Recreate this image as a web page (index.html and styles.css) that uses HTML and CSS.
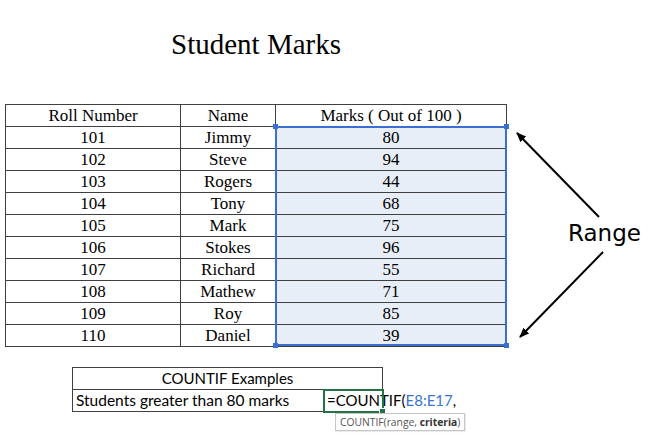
FILE: index.html
```html
<!DOCTYPE html>
<html>
<head>
<meta charset="utf-8">
<link rel="stylesheet" href="styles.css">
</head>
<body>
<div class="page">
  <h1 class="title">Student Marks</h1>

  <div class="marks">
    <div class="cell head">Roll Number</div>
    <div class="cell head">Name</div>
    <div class="cell head">Marks ( Out of 100 )</div>

    <div class="cell">101</div><div class="cell">Jimmy</div><div class="cell sel">80</div>
    <div class="cell">102</div><div class="cell">Steve</div><div class="cell sel">94</div>
    <div class="cell">103</div><div class="cell">Rogers</div><div class="cell sel">44</div>
    <div class="cell">104</div><div class="cell">Tony</div><div class="cell sel">68</div>
    <div class="cell">105</div><div class="cell">Mark</div><div class="cell sel">75</div>
    <div class="cell">106</div><div class="cell">Stokes</div><div class="cell sel">96</div>
    <div class="cell">107</div><div class="cell">Richard</div><div class="cell sel">55</div>
    <div class="cell">108</div><div class="cell">Mathew</div><div class="cell sel">71</div>
    <div class="cell">109</div><div class="cell">Roy</div><div class="cell sel">85</div>
    <div class="cell">110</div><div class="cell">Daniel</div><div class="cell sel">39</div>

    <div class="range-box">
      <span class="hdl tl"></span><span class="hdl tr"></span>
      <span class="hdl bl"></span><span class="hdl br"></span>
    </div>
  </div>

  <div class="examples">
    <div class="ex-cell ex-head">COUNTIF Examples</div>
    <div class="ex-cell students">Students greater than 80 marks</div>
    <div class="ex-cell active">
      <span class="formula">=COUNTIF(<span class="ref">E8:E17</span>,</span>
      <span class="fill-handle"></span>
      <div class="tip">COUNTIF(range, <b>criteria</b>)</div>
    </div>
  </div>

  <svg class="arrows" width="660" height="446" viewBox="0 0 660 446">
    <defs>
      <marker id="ah" markerWidth="10" markerHeight="8" refX="9" refY="4" orient="auto" markerUnits="userSpaceOnUse">
        <path d="M0,0 L10,4 L0,8 Z" fill="#000"/>
      </marker>
    </defs>
    <line x1="599" y1="217" x2="517" y2="133" stroke="#000" stroke-width="2" marker-end="url(#ah)"/>
    <line x1="603" y1="252" x2="520" y2="337" stroke="#000" stroke-width="2" marker-end="url(#ah)"/>
  </svg>
  <div class="range-label">Range</div>
</div>
</body>
</html>
```

FILE: styles.css
```css
html, body {
  margin: 0;
  padding: 0;
  background: #ffffff;
}

.page {
  position: relative;
  width: 660px;
  height: 446px;
  overflow: hidden;
  padding-top: 28px;
  box-sizing: border-box;
}

.title {
  margin: 0 0 0 5px;
  width: 502px;
  text-align: center;
  font-family: "Liberation Serif", "Times New Roman", serif;
  font-weight: normal;
  font-size: 29px;
  line-height: 32px;
  color: #000;
}

.marks {
  position: relative;
  margin: 44px 0 0 5px;
  width: 502px;
  box-sizing: border-box;
  display: grid;
  grid-template-columns: 175px 95px 231px;
  grid-auto-rows: 22px;
  border-left: 1px solid #3f3f3f;
  border-top: 1px solid #3f3f3f;
}

.cell {
  border-right: 1px solid #3f3f3f;
  border-bottom: 1px solid #3f3f3f;
  font-family: "Liberation Serif", "Times New Roman", serif;
  font-size: 17px;
  line-height: 20px;
  padding-top: 1px;
  text-align: center;
  color: #000;
}

.cell.sel {
  background: #e8eef8;
}

.range-box {
  position: absolute;
  left: 269px;
  top: 21px;
  width: 232px;
  height: 220px;
  border: 2px solid #3a6fd0;
  box-sizing: border-box;
  pointer-events: none;
}

.hdl {
  position: absolute;
  width: 5px;
  height: 5px;
  background: #3a6fd0;
}
.hdl.tl { left: -4px; top: -4px; }
.hdl.tr { right: -4px; top: -4px; }
.hdl.bl { left: -4px; bottom: -4px; }
.hdl.br { right: -4px; bottom: -4px; }

.examples {
  margin: 20px 0 0 72px;
  width: 311px;
  box-sizing: border-box;
  display: grid;
  grid-template-columns: 251px 59px;
  grid-auto-rows: 22px;
  border-left: 1px solid #3f3f3f;
  border-top: 1px solid #3f3f3f;
}

.ex-cell {
  position: relative;
  border-right: 1px solid #3f3f3f;
  border-bottom: 1px solid #3f3f3f;
  font-family: Lato, "Open Sans", sans-serif;
  font-size: 15px;
  line-height: 21px;
  padding-left: 3px;
  color: #000;
  white-space: nowrap;
}

.ex-cell.students {
  font-size: 15.5px;
}

.ex-head {
  grid-column: 1 / 3;
  text-align: center;
  padding-left: 0;
}

.ex-cell.active {
  outline: 2px solid #217346;
  outline-offset: -1px;
  overflow: visible;
}

.formula {
  font-size: 15px;
  color: #000;
}

.ref {
  color: #3a75d6;
}

.fill-handle {
  position: absolute;
  right: -4px;
  bottom: -4px;
  width: 5px;
  height: 5px;
  background: #217346;
  border: 1px solid #fff;
}

.tip {
  position: absolute;
  left: 11px;
  top: 23px;
  height: 18px;
  padding: 0 4px;
  box-sizing: border-box;
  background: #fff;
  border: 1px solid #c6c6c6;
  box-shadow: 1px 1px 1px rgba(0,0,0,0.08);
  font-family: "Open Sans", "Noto Sans", sans-serif;
  font-size: 10.3px;
  line-height: 16px;
  color: #555;
  white-space: nowrap;
}

.tip b {
  color: #333;
  font-weight: bold;
}

.arrows {
  position: absolute;
  left: 0;
  top: 0;
  pointer-events: none;
}

.range-label {
  position: absolute;
  left: 568px;
  top: 220px;
  font-family: "DejaVu Sans", Verdana, sans-serif;
  font-size: 23px;
  line-height: 27px;
  color: #000;
}
```
